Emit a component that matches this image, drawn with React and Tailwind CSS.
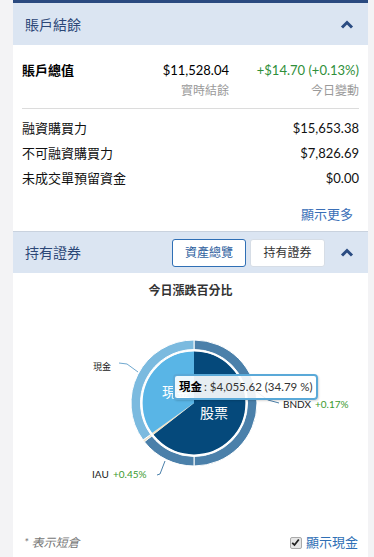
const CX = 181;
const CY = 104;

function pt(a, r) {
  const rad = (a * Math.PI) / 180;
  return [CX + r * Math.sin(rad), CY - r * Math.cos(rad)];
}

function wedge(a0, a1, r) {
  const [x0, y0] = pt(a0, r);
  const [x1, y1] = pt(a1, r);
  const large = a1 - a0 > 180 ? 1 : 0;
  return `M${CX} ${CY} L${x0} ${y0} A${r} ${r} 0 ${large} 1 ${x1} ${y1} Z`;
}

function ring(a0, a1, r0, r1) {
  const [ox0, oy0] = pt(a0, r1);
  const [ox1, oy1] = pt(a1, r1);
  const [ix0, iy0] = pt(a0, r0);
  const [ix1, iy1] = pt(a1, r0);
  const large = a1 - a0 > 180 ? 1 : 0;
  return `M${ox0} ${oy0} A${r1} ${r1} 0 ${large} 1 ${ox1} ${oy1} L${ix1} ${iy1} A${r0} ${r0} 0 ${large} 0 ${ix0} ${iy0} Z`;
}

function Caret() {
  return (
    <svg width="14" height="9" viewBox="0 0 14 9">
      <polyline points="2,7.5 7,2.5 12,7.5" fill="none" stroke="#2b4c82" strokeWidth="3" strokeLinejoin="miter" />
    </svg>
  );
}

const rows = [
  ["融資購買力", "$15,653.38"],
  ["不可融資購買力", "$7,826.69"],
  ["未成交單預留資金", "$0.00"],
];

function Chart() {
  return (
    <div className="relative h-[229px]">
      <svg width="355" height="229" className="block">
        {/* outer ring: holdings */}
        <path d={ring(0, 180, 53.5, 63)} fill="#4b80aa" stroke="#fff" strokeWidth="1" />
        <path d={ring(180, 232, 53.5, 63)} fill="#4b80aa" stroke="#fff" strokeWidth="1" />
        <path d={ring(232, 234, 53.5, 63)} fill="#efe4cc" stroke="#fff" strokeWidth="0.5" />
        <path d={ring(234, 360, 53.5, 63)} fill="#7bbadf" stroke="#fff" strokeWidth="1" />
        {/* inner pie: asset class */}
        <path d={wedge(0, 232, 52)} fill="#05497b" />
        <path d={wedge(232, 234.5, 52)} fill="#efe2c6" />
        <path d={wedge(234.5, 360, 52)} fill="#59b5e6" />
        <circle cx={CX} cy={CY} r="52" fill="none" stroke="#fff" strokeWidth="1.2" />
        <text x="163" y="98" fill="#fff" fontSize="14" textAnchor="middle">現金</text>
        <text x="201" y="119" fill="#fff" fontSize="14" textAnchor="middle">股票</text>

        {/* leader lines + labels */}
        <polyline points="106,64 114,65 125,73" fill="none" stroke="#6fa8cf" strokeWidth="1" />
        <text x="80" y="71" fontSize="9" fill="#222">現金</text>
        <polyline points="144,176 147,175 152,162" fill="none" stroke="#4b80aa" strokeWidth="1" />
        <text x="79" y="179" fontSize="10" fill="#222">IAU</text>
        <text x="100" y="179" fontSize="10" fill="#3a9a2e">+0.45%</text>
        <polyline points="241,91 255,101 266,104" fill="none" stroke="#4b80aa" strokeWidth="1" />
        <text x="270" y="109" fontSize="10" fill="#222">BNDX</text>
        <text x="302" y="109" fontSize="10" fill="#3a9a2e">+0.17%</text>
      </svg>
      <div className="absolute left-[160px] top-[75px] flex h-[26px] items-center whitespace-nowrap rounded-[4px] border-2 border-[#5aa9d8] bg-white/90 px-[4px] text-[11.5px] text-[#333] shadow-[1px_1px_2px_rgba(0,0,0,0.15)]">
        <span className="shrink-0 font-bold text-black">現金</span>
        <span className="ml-[2px] shrink-0">: $4,055.62 (34.79 %)</span>
      </div>
    </div>
  );
}

export default function App() {
  return (
    <div className="min-h-[557px] bg-[#f3f3f5] font-['Lato','Noto_Sans_CJK_TC',sans-serif]">
      <div className="ml-[13px] w-[355px] border-t-[3px] border-[#2a4a80] bg-white">
        <div className="flex h-[42px] items-center justify-between bg-[#dbe5f2] pl-[12px] pr-[14px]">
          <h2 className="text-[14px] text-[#2c4777]">賬戶結餘</h2>
          <Caret />
        </div>

        <div className="px-[9px] pb-[8px]">
          <div className="flex items-start pt-[16px]">
            <p className="w-[100px] text-[13px] font-bold leading-[18px] text-black">賬戶總值</p>
            <div className="flex w-[107px] flex-col items-end">
              <p className="text-[13px] leading-[18px] text-black">$11,528.04</p>
              <p className="mt-[4px] text-[12px] leading-[16px] text-[#9a9a9a]">實時結餘</p>
            </div>
            <div className="flex flex-1 flex-col items-end">
              <p className="text-[13px] leading-[18px] text-[#2f8f3a]">+$14.70 (+0.13%)</p>
              <p className="mt-[4px] text-[12px] leading-[16px] text-[#9a9a9a]">今日變動</p>
            </div>
          </div>
          <div className="mt-[9px] border-t border-[#dcdcdc]" />
          <div className="mt-[7px]">
            {rows.map(([label, value]) => (
              <div key={label} className="flex h-[25px] items-center justify-between text-[13px] text-[#111]">
                <span>{label}</span>
                <span>{value}</span>
              </div>
            ))}
          </div>
          <div className="mt-[14px] flex justify-end pr-[6px]">
            <a className="text-[13px] leading-[18px] text-[#3a6fb7]">顯示更多</a>
          </div>
        </div>

        <div className="flex h-[42px] items-center border-t border-[#c9d2de] bg-[#dbe5f2] pl-[12px] pr-[14px]">
          <h2 className="flex-1 text-[14px] text-[#2c4777]">持有證券</h2>
          <button className="flex h-[28px] w-[74px] items-center justify-center rounded-[3px] border border-[#2f6fb5] bg-white text-[12px] text-[#2f5f9e]">
            資產總覽
          </button>
          <button className="ml-[4px] flex h-[28px] w-[75px] items-center justify-center rounded-[3px] border border-[#d6dde6] bg-white text-[12px] text-[#333]">
            持有證券
          </button>
          <div className="ml-[15px]">
            <Caret />
          </div>
        </div>

        <p className="pt-[9px] text-center text-[12px] font-bold leading-[17px] text-[#333]">今日漲跌百分比</p>

        <Chart />

        <div className="flex items-center justify-between pb-[9px] pl-[11px] pr-[10px] pt-[5px]">
          <span className="text-[12px] italic text-[#777]">* 表示短倉</span>
          <label className="flex items-center gap-[4px]">
            <span className="flex h-[12px] w-[12px] items-center justify-center rounded-[2px] border border-[#aaa] bg-[#e6e6e6]">
              <svg width="9" height="9" viewBox="0 0 9 9">
                <polyline points="1.2,4.8 3.5,7 7.8,1.5" fill="none" stroke="#222" strokeWidth="1.8" />
              </svg>
            </span>
            <span className="text-[13px] text-[#2f6fb5]">顯示現金</span>
          </label>
        </div>
      </div>
    </div>
  );
}
